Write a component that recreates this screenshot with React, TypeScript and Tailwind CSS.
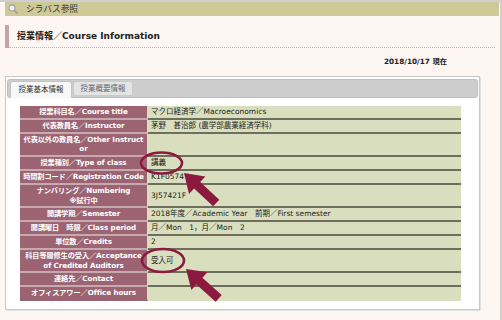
import React from 'react';

type Row = { label: React.ReactNode; value: string };

const rows: Row[] = [
  { label: '授業科目名／Course title', value: 'マクロ経済学／Macroeconomics' },
  { label: '代表教員名／Instructor', value: '茅野　甚治郎 (農学部農業経済学科)' },
  { label: <>代表以外の教員名／Other Instruct<br />or</>, value: '' },
  { label: '授業種別／Type of class', value: '講義' },
  { label: '時間割コード／Registration Code', value: 'K1F0574' },
  { label: <>ナンバリング／Numbering<br />※試行中</>, value: '3J57421F' },
  { label: '開講学期／Semester', value: '2018年度／Academic Year　前期／First semester' },
  { label: '開講曜日　時限／Class period', value: '月／Mon　1，月／Mon　2' },
  { label: '単位数／Credits', value: '2' },
  { label: <>科目等履修生の受入／Acceptance<br />of Credited Auditors</>, value: '受入可' },
  { label: '連絡先／Contact', value: '' },
  { label: 'オフィスアワー／Office hours', value: '' },
];

const SearchIcon = () => (
  <svg width="10" height="10" viewBox="0 0 10 10">
    <line x1="5.8" y1="5.8" x2="9.3" y2="9.3" stroke="#a3a3a3" strokeWidth="2" strokeLinecap="round" />
    <circle cx="4" cy="4" r="3" fill="#f2f2f2" stroke="#a8a8a8" strokeWidth="1.3" />
  </svg>
);

// arrow pointing to -x, tip at origin
const arrowPath = 'M0 0 L18 -12 L18 -4.5 L44 -4.5 L44 4.5 L18 4.5 L18 12 Z';

export default function App() {
  return (
    <div className="relative w-[502px] h-[320px] overflow-hidden bg-[#fdf6f3] border-t-2 border-r-2 border-[#cfcfcf] font-['DejaVu_Sans','Noto_Sans_CJK_JP',sans-serif] text-[#222]">
      {/* top bar */}
      <div className="ml-[5px] mr-[1px] h-[14px] bg-[#cdca97] flex items-center pl-[3px] gap-[8px]">
        <SearchIcon />
        <span className="text-[8.7px] leading-none text-[#333]">シラバス参照</span>
      </div>

      {/* section title */}
      <div className="mt-[9px] ml-[5px] mr-[5px] flex">
        <div className="w-[4px] h-[23px] bg-[#c6a2ab]" />
        <div className="flex-1 h-[23px] flex items-center pl-[8px] border-b border-dotted border-[#b8b8b8] text-[9px] font-bold leading-none">
          授業情報／Course Information
        </div>
      </div>

      <div className="mt-[9px] mr-[53px] text-right text-[7.3px] font-bold leading-[10px]">2018/10/17 現在</div>

      {/* panel */}
      <div className="mt-[9px] ml-[5px] w-[475px] h-[234px] bg-white border border-[#c8c8c8] shadow-[1px_1px_0_#e2e2e2] pt-[2px] px-[1px]">
        <div className="h-[19px] bg-[#cdcdcd] border border-[#bdbdbd] rounded-[3px] flex items-end pl-[2px] gap-[1px]">
          <div className="w-[62px] h-[17px] -mb-[1px] bg-[#f7f7f7] border border-b-0 border-[#c4c4c4] rounded-t-[3px] flex items-center justify-center text-[7.5px] text-[#333]">
            授業基本情報
          </div>
          <div className="w-[60px] h-[15px] mb-[1px] bg-[#e4e4e4] border border-[#cacaca] rounded-t-[3px] flex items-center justify-center text-[7.5px] text-[#666]">
            授業概要情報
          </div>
        </div>

        <div className="mt-[8px] ml-[13px] w-[441px] grid grid-cols-[128px_313px]">
          {rows.map((r, i) => {
            const last = i === rows.length - 1;
            return (
              <React.Fragment key={i}>
                <div
                  className={`bg-[#9c6472] border-r border-r-[#e6d6d9] flex flex-col justify-center overflow-hidden py-[1px] ${last ? 'border-b-2 border-b-transparent' : 'border-b-2 border-b-[#c7a9b0]'}`}
                >
                  <div className="text-center whitespace-nowrap text-white font-bold text-[7.2px] leading-[9.8px] px-[2px] tracking-[-0.1px]">{r.label}</div>
                </div>
                <div
                  className={`bg-[#d9dfbe] flex items-center pl-[3px] py-[1px] whitespace-nowrap text-[7.5px] leading-[9.8px] text-[#222] ${last ? 'border-b-2 border-b-transparent' : 'border-b-2 border-b-[#6d6e5d]'}`}
                >
                  {r.value}
                </div>
              </React.Fragment>
            );
          })}
        </div>
      </div>

      {/* annotations */}
      <svg className="absolute left-0 top-0 pointer-events-none" width="502" height="320" viewBox="0 0 502 320">
        <ellipse cx="161.5" cy="161" rx="20.5" ry="10.5" fill="none" stroke="#8c1a3e" strokeWidth="2.6" />
        <path d={arrowPath} fill="#8c1a3e" transform="translate(184 171) rotate(43)" />
        <ellipse cx="163" cy="258.5" rx="21" ry="11.5" fill="none" stroke="#8c1a3e" strokeWidth="2.6" />
        <path d={arrowPath} fill="#8c1a3e" transform="translate(186 267) rotate(42)" />
      </svg>
    </div>
  );
}
